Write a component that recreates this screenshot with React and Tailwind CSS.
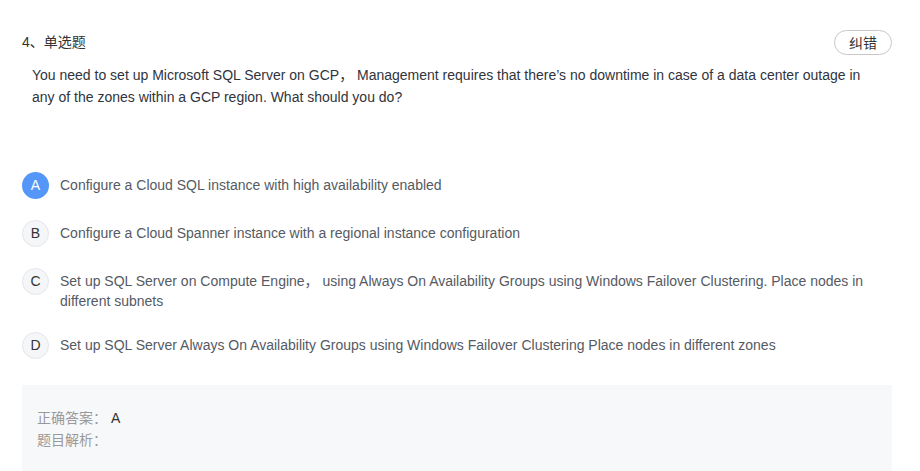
const options = [
  { key: 'A', text: 'Configure a Cloud SQL instance with high availability enabled' },
  { key: 'B', text: 'Configure a Cloud Spanner instance with a regional instance configuration' },
  {
    key: 'C',
    text: 'Set up SQL Server on Compute Engine，  using Always On Availability Groups using Windows Failover Clustering. Place nodes in different subnets',
  },
  {
    key: 'D',
    text: 'Set up SQL Server Always On Availability Groups using Windows Failover Clustering Place nodes in different zones',
  },
]

export default function App() {
  const selected = 'A'

  return (
    <div
      className="w-[920px] h-[471px] overflow-hidden bg-white text-[#333]"
      style={{ fontFamily: '"Liberation Sans", Arial, "Noto Sans CJK SC", sans-serif' }}
    >
      <div className="pl-[22px] pr-[28px] pt-[30px]">
        <div className="flex items-center justify-between h-[25px]">
          <span className="text-[14px] text-[#333]">4、单选题</span>
          <button
            type="button"
            className="w-[58px] h-[25px] pt-[2px] rounded-full border border-[#c8c8c8] bg-white text-[14px] text-[#333]"
          >
            纠错
          </button>
        </div>

        <p className="mt-[9px] pl-[10px] pr-[20px] text-[14px] leading-[22px] text-[#30343d]">
          You need to set up Microsoft SQL Server on GCP，  Management requires that there’s no downtime in case of a data
          center outage in any of the zones within a GCP region. What should you do?
        </p>

        <div className="mt-[64px] flex flex-col gap-[20px]">
          {options.map((option) => (
            <OptionRow key={option.key} option={option} isSelected={option.key === selected} />
          ))}
        </div>

        <div className="mt-[25px] h-[100px] bg-[#f7f8fa] px-[15px] pt-[22px] text-[14px] leading-[22px]">
          <div className="flex">
            <span className="text-[#999]">正确答案：</span>
            <span className="ml-[4px] text-[#333]">A</span>
          </div>
          <div className="text-[#999]">题目解析：</div>
        </div>
      </div>
    </div>
  )
}

function OptionRow({ option, isSelected }) {
  return (
    <div className="flex items-start min-h-[28px]">
      <div
        className={`flex h-[27px] w-[27px] shrink-0 items-center justify-center rounded-full text-[14px] ${
          isSelected ? 'bg-[#5497f8] text-white' : 'bg-[#f5f6f8] border border-[#e3e5ea] text-[#333]'
        }`}
      >
        {option.key}
      </div>
      <p className="ml-[11px] pt-[3px] pb-[1px] pr-[10px] text-[14px] leading-[20px] text-[#555a63]">{option.text}</p>
    </div>
  )
}
